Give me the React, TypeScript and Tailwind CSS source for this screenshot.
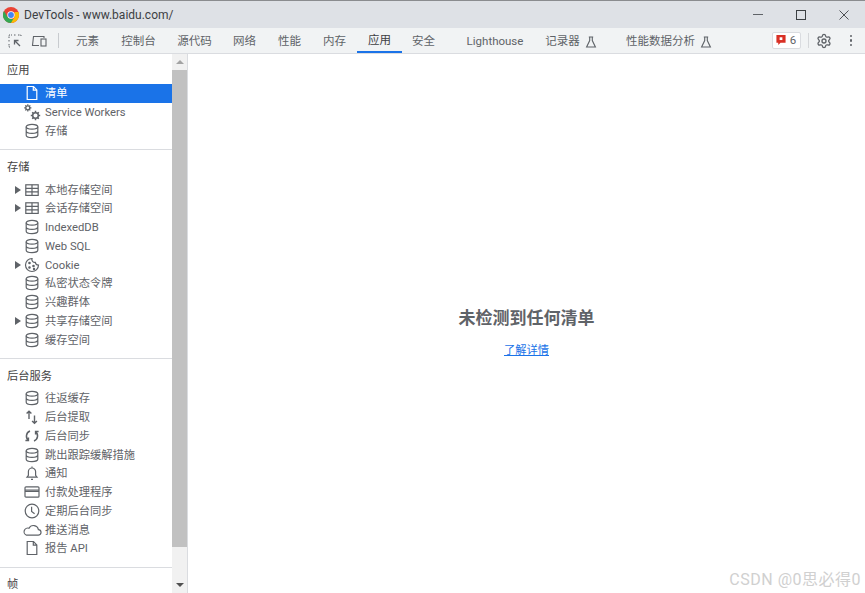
import type { ReactNode } from 'react'
import { Settings } from 'lucide-react'

const font = `font-['Roboto','Noto_Sans_CJK_SC',sans-serif]`

type IconName = 'db' | 'table' | 'file' | 'gears' | 'cookie' | 'updown' | 'sync' | 'bell' | 'card' | 'clock' | 'cloud'

type Item = {
  readonly label: string
  readonly icon: IconName
  readonly arrow?: boolean
  readonly selected?: boolean
}

const tabs = [
  { label: '元素', className: 'w-[45px] ml-[1px]' },
  { label: '控制台', className: 'w-[57px]' },
  { label: '源代码', className: 'w-[55px]' },
  { label: '网络', className: 'w-[45px]' },
  { label: '性能', className: 'w-[45px]' },
  { label: '内存', className: 'w-[45px]' },
  { label: '应用', className: 'w-[45px]', active: true },
  { label: '安全', className: 'w-[43px]' },
  { label: 'Lighthouse', className: 'w-[100px]' },
  { label: '记录器', flask: true, className: 'w-[52px]' },
  { label: '性能数据分析', flask: true, className: 'w-[144px]' },
]

const appItems: readonly Item[] = [
  { label: '清单', icon: 'file', selected: true },
  { label: 'Service Workers', icon: 'gears' },
  { label: '存储', icon: 'db' },
]

const storageItems: readonly Item[] = [
  { label: '本地存储空间', icon: 'table', arrow: true },
  { label: '会话存储空间', icon: 'table', arrow: true },
  { label: 'IndexedDB', icon: 'db' },
  { label: 'Web SQL', icon: 'db' },
  { label: 'Cookie', icon: 'cookie', arrow: true },
  { label: '私密状态令牌', icon: 'db' },
  { label: '兴趣群体', icon: 'db' },
  { label: '共享存储空间', icon: 'db', arrow: true },
  { label: '缓存空间', icon: 'db' },
]

const backgroundItems: readonly Item[] = [
  { label: '往返缓存', icon: 'db' },
  { label: '后台提取', icon: 'updown' },
  { label: '后台同步', icon: 'sync' },
  { label: '跳出跟踪缓解措施', icon: 'db' },
  { label: '通知', icon: 'bell' },
  { label: '付款处理程序', icon: 'card' },
  { label: '定期后台同步', icon: 'clock' },
  { label: '推送消息', icon: 'cloud' },
  { label: '报告 API', icon: 'file' },
]

const iconPaths: Record<IconName, ReactNode> = {
  db: (
    <>
      <ellipse cx="8" cy="3.800" rx="5.800" ry="2.400" />
      <path d="M2.200 3.800v8.400c0 1.300 2.600 2.400 5.800 2.400s5.800-1.100 5.800-2.400V3.800M2.200 8c0 1.300 2.600 2.400 5.800 2.400s5.800-1.100 5.800-2.400" />
    </>
  ),
  table: (
    <>
      <rect x="1.800" y="2.800" width="12.400" height="10.600" />
      <path d="M1.800 6.400h12.400M1.800 9.900h12.400M8 2.800v10.600" />
    </>
  ),
  file: <path d="M3.200 1.500h6.300l3.300 3.400v9.600H3.200zM9.300 1.500v3.600h3.500" />,
  gears: (
    <>
      <circle cx="3.800" cy="3.800" r="2" strokeWidth="1.300" />
      <path d="M3.800 .2v1.600M3.800 5.800v1.600M.2 3.800h1.600M5.800 3.800h1.600M1.300 1.300l1 1M5.300 5.300l1 1M6.300 1.300l-1 1M2.300 5.300l-1 1" strokeWidth="1.200" />
      <circle cx="11.500" cy="11.500" r="2.800" strokeWidth="1.500" />
      <path d="M11.500 6.800v1.800M11.500 14.400v1.800M6.800 11.500h1.800M14.400 11.500h1.800M8.200 8.200l1.200 1.200M13.600 13.600l1.200 1.200M14.800 8.200l-1.200 1.200M9.400 13.600l-1.200 1.200" strokeWidth="1.500" />
    </>
  ),
  cookie: (
    <>
      <path d="M8 1.500a6.500 6.500 0 1 0 6.500 6.500 3 3 0 0 1-3.200-2.600A3 3 0 0 1 8 1.500z" />
      <circle cx="5.500" cy="6" r=".7" fill="currentColor" />
      <circle cx="5.500" cy="10.500" r=".7" fill="currentColor" />
      <circle cx="9.500" cy="9" r=".7" fill="currentColor" />
      <circle cx="10" cy="12" r=".6" fill="currentColor" />
    </>
  ),
  updown: <path d="M5 10V2.200M2.600 4.600L5 2.200l2.400 2.400M10.500 6.500v7.800M8.100 11.900l2.400 2.400 2.400-2.400" strokeWidth="1.400" />,
  sync: <path d="M6 3a5.400 5.400 0 0 0-1.400 9.400M4.400 9.600v3h-3M10 13a5.400 5.400 0 0 0 1.400-9.400M11.600 6.400v-3h3" strokeWidth="1.500" />,
  bell: <path d="M3 12.200h10l-1.400-1.800V6.600a3.600 3.600 0 0 0-7.200 0v3.800zM7 14.400h2M8 1.600v1.400" />,
  card: (
    <>
      <rect x="1" y="2.800" width="14" height="10.400" rx="1" />
      <path d="M1 6h14M1 7.400h14" />
    </>
  ),
  clock: (
    <>
      <circle cx="8" cy="8" r="6.800" />
      <path d="M7.600 3.800v4.600l3 2.400" />
    </>
  ),
  cloud: <path d="M2.500 13.200H14a2.800 2.800 0 0 0 .4-5.600 5 5 0 0 0-9.400-1.300 3.500 3.500 0 0 0-2.500 6.900z" />,
}

function SideIcon({ name, selected }: { readonly name: IconName; readonly selected?: boolean }) {
  return (
    <svg
      viewBox="0 0 16 16"
      fill="none"
      stroke="currentColor"
      strokeWidth="1.2"
      className={selected ? 'size-[16px] overflow-visible text-white' : 'size-[16px] overflow-visible text-[#5f6368]'}
    >
      {iconPaths[name]}
    </svg>
  )
}

function Row({ item }: { readonly item: Item }) {
  return (
    <div
      className={
        item.selected
          ? 'flex h-[18.75px] items-center bg-[#1a73e8] text-white'
          : 'flex h-[18.75px] items-center text-[#5f6368]'
      }
    >
      <div className="flex w-[24px] shrink-0 justify-end pr-[3px]">
        {item.arrow && <div className="h-0 w-0 border-y-[4px] border-l-[6px] border-y-transparent border-l-[#5f6368]" />}
      </div>
      <SideIcon name={item.icon} selected={item.selected} />
      <span className="ml-[5px] pt-[1px] text-[11.25px] leading-none">{item.label}</span>
    </div>
  )
}

function Section({ title, items, pad }: { readonly title: string; readonly items: readonly Item[]; readonly pad: string }) {
  return (
    <div className="border-b border-[#dadce0] pb-[9px]">
      <div className={`flex items-center px-[7px] text-[11.25px] text-[#444] ${pad}`}>{title}</div>
      {items.map(item => (
        <Row key={item.label} item={item} />
      ))}
    </div>
  )
}

function Flask() {
  return (
    <svg viewBox="0 0 12 12" fill="none" stroke="#5f6368" strokeWidth="1.100" className="ml-[5px] size-[12px] shrink-0">
      <path d="M3.800 1h4.400M4.700 1v3.600L1.600 11h8.800L7.300 4.600V1" />
    </svg>
  )
}

function ChromeLogo() {
  return (
    <svg viewBox="0 0 16 16" className="size-[16px]">
      <circle cx="8" cy="8" r="8" fill="#ea4335" />
      <path d="M8 16A8 8 0 0 1 1 4l3.600 6 3.400 2 0 0 3.500 0z" fill="#34a853" />
      <path d="M8 16l3.600-6.200L11.500 5H15.400A8 8 0 0 1 8 16z" fill="#fbbc05" />
      <circle cx="8" cy="8" r="3.700" fill="#fff" />
      <circle cx="8" cy="8" r="2.900" fill="#4285f4" />
    </svg>
  )
}

export default function App() {
  return (
    <div className={`relative flex h-[593px] w-[865px] flex-col overflow-hidden bg-white ${font}`}>
      <div className="flex h-[28px] shrink-0 items-center border-t border-[#8a8c8f] bg-[#dee1e6] pl-[3px]">
        <ChromeLogo />
        <span className="ml-[5px] text-[12px] text-[#3c4043]">DevTools - www.baidu.com/</span>
        <div className="ml-auto flex items-center text-[#3c4043]">
          <div className="flex w-[42px] justify-center">
            <div className="h-px w-[10px] bg-[#5f6368]" />
          </div>
          <div className="flex w-[44px] justify-center">
            <div className="size-[10px] border border-[#3c4043]" />
          </div>
          <div className="flex w-[42px] justify-center">
            <svg viewBox="0 0 10 10" stroke="#3c4043" strokeWidth="0.900" className="size-[10px]">
              <path d="M.5.5l9 9M9.500.5l-9 9" />
            </svg>
          </div>
        </div>
      </div>

      <div className="flex h-[26px] shrink-0 items-stretch border-b border-[#dadce0] bg-[#f1f3f4]">
        <div className="flex w-[58px] items-center gap-[9px] pl-[8px]">
          <svg viewBox="0 0 14 14" fill="none" stroke="#5f6368" className="size-[14px] shrink-0">
            <path d="M1 4V1h3M6 1h2M10 1h3v2M1 6v2M1 10v3h2" strokeDasharray="1.500 1" />
            <path d="M12 12L6.500 6.500M6.500 10.500v-4h4" strokeWidth="1.300" />
          </svg>
          <svg viewBox="0 0 16 14" fill="none" stroke="#5f6368" strokeWidth="1.100" className="h-[14px] w-[16px] shrink-0">
            <path d="M8 11.500H1.500L2.500 2.500H13V4" />
            <rect x="10" y="5" width="5" height="7" />
          </svg>
        </div>
        <div className="my-[5px] w-px bg-[#c8cbcf]" />
        <div className="flex items-stretch pl-[5px]">
          {tabs.map(tab => (
            <div
              key={tab.label}
              className={`flex shrink-0 items-center justify-center pt-[2px] text-[11.5px] whitespace-nowrap ${tab.className} ${
                tab.active ? 'border-b-2 border-[#1a73e8] text-[#3c4043]' : 'text-[#5f6368]'
              }`}
            >
              {tab.label}
              {tab.flask && <Flask />}
            </div>
          ))}
        </div>
        <div className="ml-auto flex items-center">
          <div className="flex h-[17px] w-[29px] items-center justify-center gap-[4px] rounded-[2px] border border-[#dadce0] bg-white text-[11.5px] text-[#5f6368]">
            <svg viewBox="0 0 10 12" className="h-[11px] w-[10px]">
              <path d="M0 0h10v8.500H4.500L2 11V8.500H0z" fill="#d93025" />
              <rect x="3.500" y="2.500" width="3" height="3" fill="#fff" />
            </svg>
            6
          </div>
          <div className="mr-[6px] ml-[7px] h-[15px] w-px bg-[#d5d7da]" />
          <Settings className="ml-[1px] size-[16px] text-[#5f6368]" strokeWidth={2} />
          <div className="mr-[13px] ml-[18px] flex flex-col gap-[2px]">
            <div className="size-[2.500px] rounded-full bg-[#5f6368]" />
            <div className="size-[2.500px] rounded-full bg-[#5f6368]" />
            <div className="size-[2.500px] rounded-full bg-[#5f6368]" />
          </div>
        </div>
      </div>

      <div className="flex min-h-0 flex-1">
        <div className="w-[172px] shrink-0 overflow-hidden">
          <Section title="应用" items={appItems} pad="h-[30px] pt-[5px]" />
          <Section title="存储" items={storageItems} pad="h-[30px] pt-[6px]" />
          <Section title="后台服务" items={backgroundItems} pad="h-[30px] pt-[6px]" />
          <div className="flex h-[34px] items-center px-[7px] pt-[2px] text-[11.25px] text-[#444]">帧</div>
        </div>

        <div className="flex w-[16px] shrink-0 flex-col items-center border-r border-[#dadce0] bg-[#f1f1f1]">
          <div className="flex h-[16px] w-full shrink-0 items-center justify-center">
            <div className="h-0 w-0 border-x-[4px] border-b-[4px] border-x-transparent border-b-[#a3a3a3]" />
          </div>
          <div className="h-[477px] w-[15px] shrink-0 bg-[#c1c1c1]" />
          <div className="mt-auto flex h-[17px] w-full items-center justify-center">
            <div className="h-0 w-0 border-x-[4px] border-t-[4px] border-x-transparent border-t-[#505050]" />
          </div>
        </div>

        <div className="flex flex-1 flex-col items-center justify-center pt-[18px]">
          <div className="mb-[14px] text-[17px] leading-[22px] font-bold text-[#5f6368]">未检测到任何清单</div>
          <a className="text-[11.25px] leading-[16px] text-[#1a73e8] underline">了解详情</a>
        </div>
      </div>

      <div className="absolute right-[4px] bottom-[3px] text-[16px] leading-[20px] tracking-[0.5px] text-[#d0d0d0]">
        CSDN @0思必得0
      </div>
    </div>
  )
}
